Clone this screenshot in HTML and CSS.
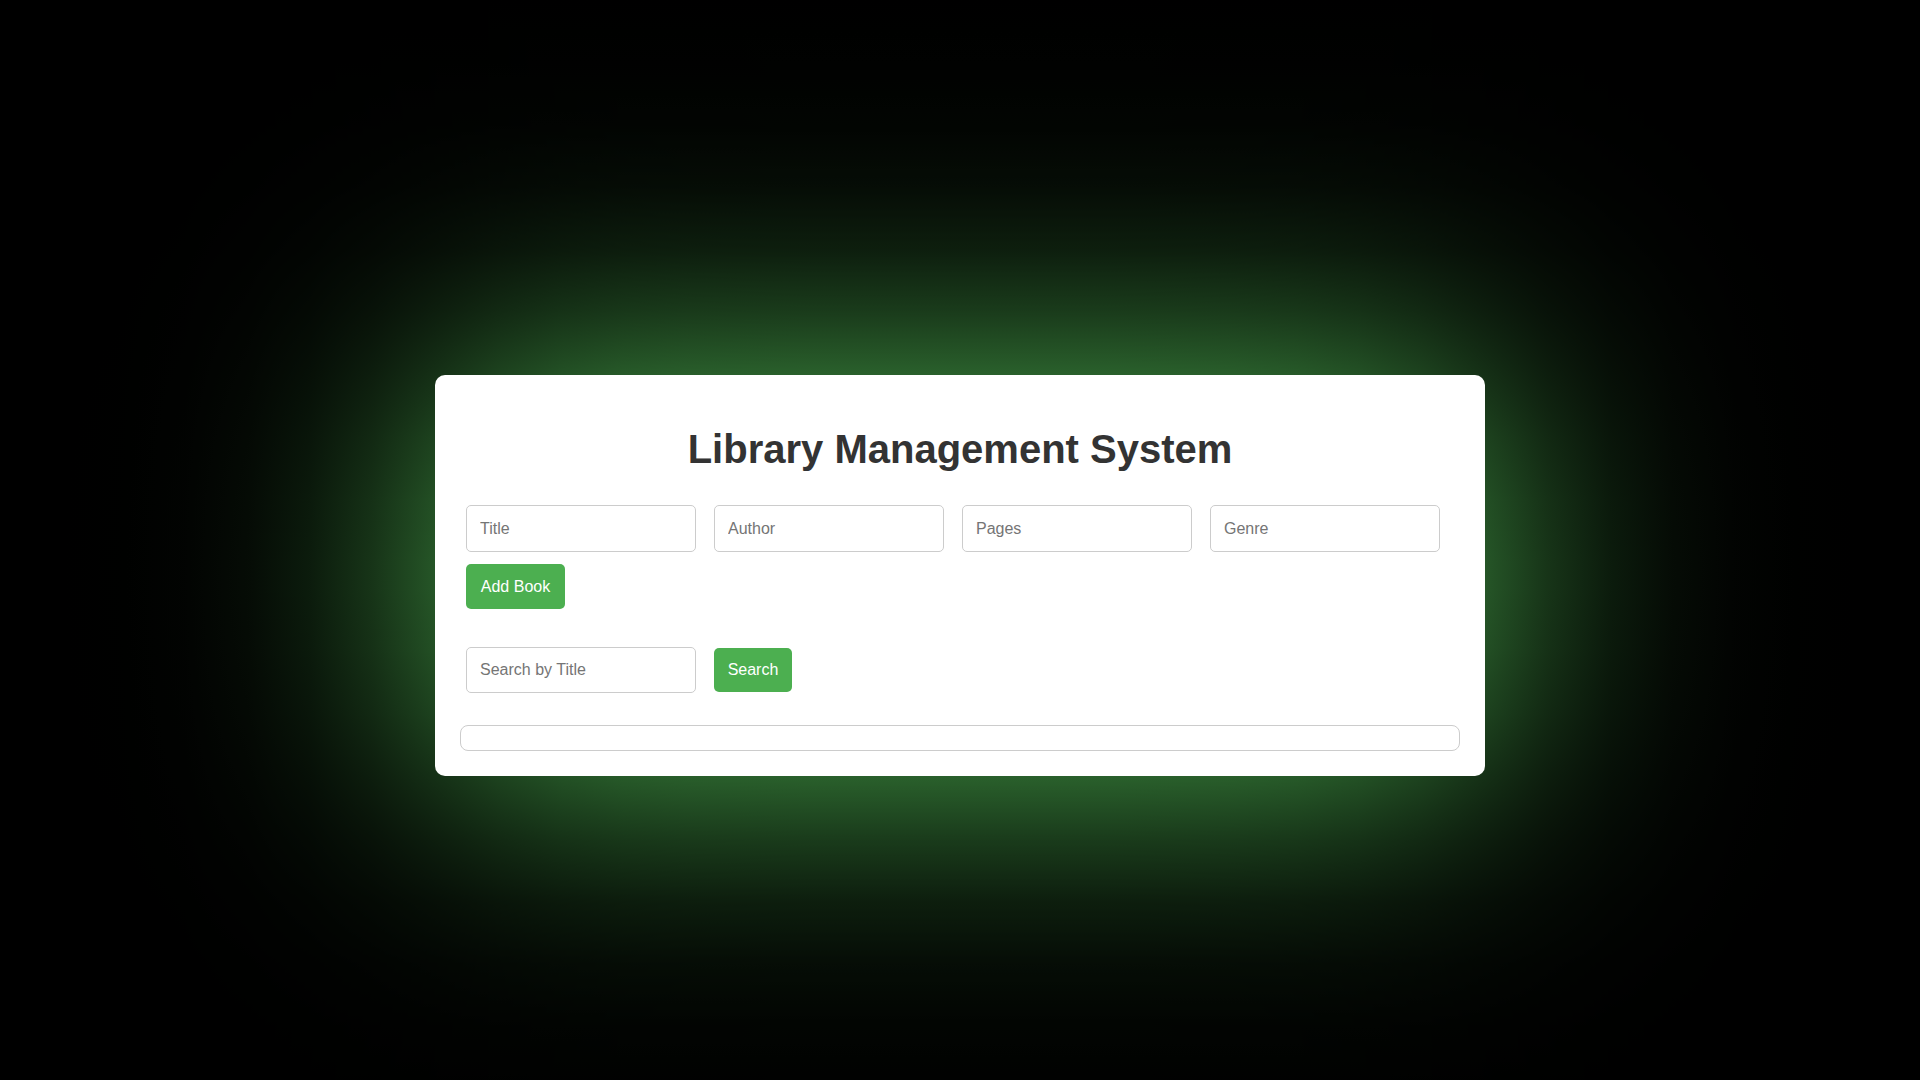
FILE: index.html
```html
<!DOCTYPE html>
<html lang="en">
<head>
<meta charset="utf-8">
<title>Library Management System</title>
<link rel="stylesheet" href="styles.css">
</head>
<body>
<div class="page">
  <div class="card">
    <h1 class="title">Library Management System</h1>
    <div class="form">
      <div class="fields">
        <input class="field" type="text" placeholder="Title">
        <input class="field" type="text" placeholder="Author">
        <input class="field" type="number" placeholder="Pages">
        <input class="field" type="text" placeholder="Genre">
      </div>
      <button class="btn btn-add" type="button">Add Book</button>
    </div>
    <div class="search">
      <input class="field field-search" type="text" placeholder="Search by Title">
      <button class="btn btn-search" type="button">Search</button>
    </div>
    <div class="results"></div>
  </div>
</div>
</body>
</html>
```

FILE: styles.css
```css
* {
  box-sizing: border-box;
}

html, body {
  margin: 0;
  padding: 0;
  background: #000;
}

body {
  font-family: "Liberation Sans", Arial, sans-serif;
  color: #333;
}

/* Green glow around the card, drawn as the product of a horizontal and a
   vertical gaussian profile (same look as a 250px box-shadow blur). */
.page {
  min-height: 100vh;
  padding-top: 71px;
  display: flex;
  align-items: center;
  justify-content: center;
  background-color: transparent;
  background-image:
    linear-gradient(to right,
      rgb(0,0,0) 0px, rgb(0,0,0) 60px, rgb(0,1,0) 122.5px, rgb(2,4,2) 185px,
      rgb(6,13,6) 247.5px, rgb(13,31,14) 310px, rgb(26,59,27) 372.5px,
      rgb(42,96,44) 435px, rgb(58,133,61) 497.5px, rgb(70,162,74) 560px,
      rgb(78,180,82) 622.5px, rgb(82,188,86) 685px, rgb(83,191,87) 747.5px,
      rgb(84,193,88) 810px, rgb(84,193,88) 1110px, rgb(83,191,87) 1172.5px,
      rgb(82,188,86) 1235px, rgb(78,180,82) 1297.5px, rgb(70,162,74) 1360px,
      rgb(58,133,61) 1422.5px, rgb(42,96,44) 1485px, rgb(26,59,27) 1547.5px,
      rgb(13,31,14) 1610px, rgb(6,13,6) 1672.5px, rgb(2,4,2) 1735px,
      rgb(0,1,0) 1797.5px, rgb(0,0,0) 1860px, rgb(0,0,0) 1920px),
    linear-gradient(to bottom,
      rgb(0,0,0) 0px, rgb(2,2,2) 62.5px, rgb(6,6,6) 125px, rgb(17,17,17) 187.5px,
      rgb(40,40,40) 250px, rgb(79,79,79) 312.5px, rgb(127,127,127) 375px,
      rgb(176,176,176) 437.5px, rgb(211,211,211) 500px, rgb(227,227,227) 562.5px,
      rgb(227,227,227) 588.5px, rgb(211,211,211) 651px, rgb(176,176,176) 713.5px,
      rgb(127,127,127) 776px, rgb(79,79,79) 838.5px, rgb(40,40,40) 901px,
      rgb(17,17,17) 963.5px, rgb(6,6,6) 1026px, rgb(2,2,2) 1088.5px);
  background-blend-mode: multiply;
}

.card {
  width: 1050px;
  padding: 25px;
  background: #fff;
  border-radius: 10px;
}

.title {
  margin: 25.5px 0 33.5px;
  font-size: 40px;
  font-weight: bold;
  line-height: 46px;
  text-align: center;
  color: #333;
}

.form {
  padding-left: 6px;
  display: flex;
  flex-direction: column;
  align-items: flex-start;
}

.fields {
  display: flex;
  gap: 18px;
}

.field {
  width: 230px;
  height: 47px;
  padding: 0 13px;
  border: 1px solid #ccc;
  border-radius: 5px;
  font-family: "Liberation Sans", Arial, sans-serif;
  font-size: 16px;
  color: #333;
  background: #fff;
  outline: none;
  -moz-appearance: textfield;
}

.field::-webkit-outer-spin-button,
.field::-webkit-inner-spin-button {
  -webkit-appearance: none;
  margin: 0;
}

.field::placeholder {
  color: #757575;
}

.btn {
  border: none;
  border-radius: 5px;
  background: #4caf50;
  color: #fff;
  font-family: "Liberation Sans", Arial, sans-serif;
  font-size: 16px;
  padding: 0;
  cursor: pointer;
}

.btn-add {
  margin-top: 12px;
  width: 99px;
  height: 45px;
}

.search {
  margin-top: 38px;
  padding-left: 6px;
  display: flex;
  align-items: center;
  gap: 18px;
}

.field-search {
  height: 46px;
}

.btn-search {
  width: 78px;
  height: 44px;
}

.results {
  margin-top: 32px;
  height: 26px;
  border: 1px solid #ccc;
  border-radius: 8px;
}
```
